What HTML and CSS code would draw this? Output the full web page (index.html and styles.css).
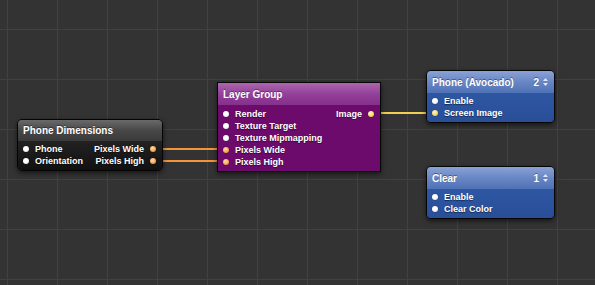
FILE: index.html
```html
<!DOCTYPE html>
<html lang="en">
<head>
  <meta charset="UTF-8" />
  <title>Composition Editor</title>
  <link rel="stylesheet" href="styles.css">
</head>
<body>
  <div class="canvas">
    <svg class="wires" width="595" height="285">
      <line x1="160" y1="149" x2="222" y2="149" class="wire-orange" />
      <line x1="160" y1="161" x2="222" y2="161" class="wire-orange" />
      <line x1="372" y1="113" x2="430" y2="113" class="wire-yellow" />
    </svg>

    <div class="node node-dark" style="left: 17px; top: 119px; width: 146px;">
      <div class="node-head">Phone Dimensions</div>
      <div class="node-body">
        <div class="col">
          <div class="port"><span class="dot"></span>Phone</div>
          <div class="port"><span class="dot"></span>Orientation</div>
        </div>
        <div class="col col-out">
          <div class="port">Pixels Wide<span class="dot dot-orange"></span></div>
          <div class="port">Pixels High<span class="dot dot-orange"></span></div>
        </div>
      </div>
    </div>

    <div class="node node-purple" style="left: 217px; top: 82px; width: 164px;">
      <div class="node-head">Layer Group</div>
      <div class="node-body">
        <div class="col">
          <div class="port"><span class="dot"></span>Render</div>
          <div class="port"><span class="dot"></span>Texture Target</div>
          <div class="port"><span class="dot"></span>Texture Mipmapping</div>
          <div class="port"><span class="dot dot-orange"></span>Pixels Wide</div>
          <div class="port"><span class="dot dot-orange"></span>Pixels High</div>
        </div>
        <div class="col col-out">
          <div class="port">Image<span class="dot dot-yellow"></span></div>
        </div>
      </div>
    </div>

    <div class="node node-blue" style="left: 426px; top: 70px; width: 129px;">
      <div class="node-head">
        <span>Phone (Avocado)</span>
        <span class="layer">2
          <svg width="5" height="8" viewBox="0 0 5 8"><path d="M2.5 0 L5 3 L0 3 Z M0 5 L5 5 L2.5 8 Z" fill="#dfe6f4"/></svg>
        </span>
      </div>
      <div class="node-body">
        <div class="col">
          <div class="port"><span class="dot"></span>Enable</div>
          <div class="port"><span class="dot dot-yellow"></span>Screen Image</div>
        </div>
      </div>
    </div>

    <div class="node node-blue" style="left: 426px; top: 166px; width: 129px;">
      <div class="node-head">
        <span>Clear</span>
        <span class="layer">1
          <svg width="5" height="8" viewBox="0 0 5 8"><path d="M2.5 0 L5 3 L0 3 Z M0 5 L5 5 L2.5 8 Z" fill="#dfe6f4"/></svg>
        </span>
      </div>
      <div class="node-body">
        <div class="col">
          <div class="port"><span class="dot"></span>Enable</div>
          <div class="port"><span class="dot"></span>Clear Color</div>
        </div>
      </div>
    </div>
  </div>
</body>
</html>
```

FILE: styles.css
```css
body {
  margin: 0;
  background-color: #333333;
  font-family: 'Liberation Sans', Arial, sans-serif;
  color: #ffffff;
}

.canvas {
  position: relative;
  width: 595px;
  height: 285px;
  overflow: hidden;
  background-color: #333333;
  background-image:
    linear-gradient(to right, #414141 1px, transparent 1px),
    linear-gradient(to bottom, #414141 1px, transparent 1px);
  background-size: 50px 50px;
  background-position: 7px 29px;
}

.wires {
  position: absolute;
  left: 0;
  top: 0;
}

.wire-orange {
  stroke: #f39439;
  stroke-width: 2;
}

.wire-yellow {
  stroke: #f2cf52;
  stroke-width: 2;
}

.node {
  position: absolute;
  box-sizing: border-box;
  border: 1px solid #050505;
  border-radius: 5px;
  overflow: hidden;
  box-shadow: 0 2px 5px rgba(0, 0, 0, 0.6);
}

.node-head {
  display: flex;
  justify-content: space-between;
  align-items: center;
  height: 21px;
  padding: 0 6px 0 5px;
  font-size: 10px;
  font-weight: bold;
  text-shadow: 0 -1px 0 rgba(0, 0, 0, 0.4);
}

.node-body {
  display: flex;
  justify-content: space-between;
  padding: 2px 6px 3px 5px;
  font-size: 9px;
  font-weight: bold;
  text-shadow: 0 1px 1px rgba(0, 0, 0, 0.5);
}

.col {
  display: flex;
  flex-direction: column;
}

.col-out {
  align-items: flex-end;
}

.port {
  display: flex;
  align-items: center;
  gap: 6px;
  height: 12px;
  white-space: nowrap;
}

.dot {
  width: 6px;
  height: 6px;
  border-radius: 50%;
  background: radial-gradient(circle at 40% 35%, #ffffff 40%, #d8d8d8 100%);
  box-shadow: 0 0 1px rgba(0, 0, 0, 0.6);
}

.dot-orange {
  background: radial-gradient(circle at 40% 35%, #ffd3a4 10%, #f39a3e 70%);
}

.dot-yellow {
  background: radial-gradient(circle at 40% 35%, #fff3b8 10%, #f2d052 70%);
}

.layer {
  display: flex;
  align-items: center;
  gap: 4px;
}

/* dark node */
.node-dark .node-head {
  background: linear-gradient(to bottom, #6a6a6a, #474747 50%, #3a3a3a);
}

.node-dark .node-body {
  background: linear-gradient(to bottom, #222222, #111111);
}

/* purple node */
.node-purple {
  border-radius: 0;
}

.node-purple .node-head {
  height: 22px;
  background: linear-gradient(to bottom, #ad66ad, #93409a 50%, #85308a);
}

.node-purple .node-body {
  padding-top: 3px;
  background: #6d0b6c;
}

/* blue node */
.node-blue .node-head {
  height: 22px;
  background: linear-gradient(to bottom, #8aa3d6, #6886c4 50%, #4f72b6);
}

.node-blue .node-body {
  background: linear-gradient(to bottom, #2e57a3, #2a4e98);
}
```
